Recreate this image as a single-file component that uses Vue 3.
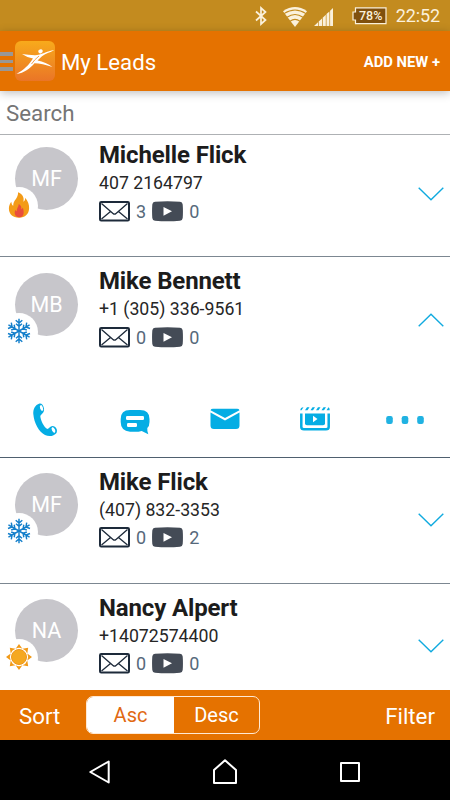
<script setup>
import { ref } from 'vue'

const leads = ref([
  { name: 'Michelle Flick', initials: 'MF', phone: '407 2164797', mails: 3, videos: 0, heat: 'hot', open: false },
  { name: 'Mike Bennett', initials: 'MB', phone: '+1 (305) 336-9561', mails: 0, videos: 0, heat: 'cold', open: true },
  { name: 'Mike Flick', initials: 'MF', phone: '(407) 832-3353', mails: 0, videos: 2, heat: 'cold', open: false },
  { name: 'Nancy Alpert', initials: 'NA', phone: '+14072574400', mails: 0, videos: 0, heat: 'warm', open: false }
])
const order = ref('Asc')
const arms = [0, 60, 120, 180, 240, 300]
const rays = [0, 45, 90, 135, 180, 225, 270, 315]
</script>

<template>
  <div class="screen">
    <div class="status">
      <svg class="bluetooth" width="14" height="20" viewBox="0 0 14 20">
        <path d="M2 5.5 L11.5 14 L7 18 V2 L11.5 6 L2 14.5" fill="none" stroke="#fbf1dc" stroke-width="1.7" />
      </svg>
      <svg class="wifi" width="24" height="20" viewBox="0 0 24 20">
        <path d="M12 20 L0 4.2 Q12 -4.2 24 4.2 Z" fill="#fbf1dc" />
        <path d="M1 6.6 Q12 -.7 23 6.6 M4 10.3 Q12 4.7 20 10.3 M7 14.2 Q12 10.5 17 14.2" fill="none" stroke="#c38b1f" stroke-width="1.1" />
      </svg>
      <svg class="signal" width="20" height="20" viewBox="0 0 20 20">
        <path d="M0 19 L4 15.2 V19Z M4.700 14.500 L8 11.4 V19 H4.700Z M8.700 10.700 L11.800 7.800 V19 H8.700Z M12.500 7.100 L15.400 4.400 V19 H12.500Z M16.100 3.700 L19 1 V19 H16.100Z" fill="#fbf1dc" />
      </svg>
      <div class="battery">
        <svg width="35" height="18" viewBox="0 0 35 18">
          <path d="M3.5 .8 H34 V16.7 H3.5 V13 H1 V5 H3.5Z" fill="#80500e" stroke="#fbf1dc" stroke-width="1.2" />
        </svg>
        <span>78%</span>
      </div>
      <span class="clock">22:52</span>
    </div>

    <header class="appbar">
      <div class="burger"><i></i><i></i><i></i></div>
      <svg class="logo" width="40" height="40" viewBox="0 0 40 40">
        <defs>
          <linearGradient id="logo-fill" x1="0" y1="0" x2="0" y2="1">
            <stop offset="0" stop-color="#f8aa1b" />
            <stop offset="1" stop-color="#ea7527" />
          </linearGradient>
        </defs>
        <rect width="40" height="40" rx="6" fill="url(#logo-fill)" />
        <ellipse cx="25.5" cy="10.3" rx="2.3" ry="2" fill="#fff" transform="rotate(-20 25.500 10.300)" />
        <path d="M7 13 Q13 14 20 14.2 C26 14 32 10 39.300 9 C36 11.300 31 12 27 15.300 L22.500 19.500 Q31 21.300 37.500 26 Q27 22.300 19.500 22.200 C15 27.500 9 32 1.500 33 C9 29 14 24 18 17.600 Q12 16.500 7 13Z" fill="#fff" />
        <path d="M24 15 Q19 19 16.500 23" fill="none" stroke="#f18c22" stroke-width=".8" />
      </svg>
      <h1>My Leads</h1>
      <button class="add">ADD NEW +</button>
    </header>

    <div class="search"><span>Search</span></div>

    <main class="list">
      <section v-for="lead in leads" :key="lead.name" class="lead" :class="{ open: lead.open }">
        <div class="summary" @click="lead.open = !lead.open">
          <div class="avatar">
            <span>{{ lead.initials }}</span>
            <div class="badge">
              <svg v-if="lead.heat === 'hot'" width="22" height="26" viewBox="0 0 22 27">
                <path d="M10 .3 C15 2.500 16.500 6 15.600 10 C17 9.300 17.600 7.500 17.500 6 C20.500 10 21.600 13 21.500 17 C21.300 23 17.500 26.700 11 26.700 C4.500 26.700 .6 23 .5 17.500 C.4 14.500 1.500 12 3 10 C3.200 12 3.700 13.500 5 14.300 C4.800 8.500 10.500 6.500 10 .3Z" fill="#f39b17" />
                <path d="M10.700 12.500 C14 14.500 13.500 16.500 13.300 18 C14.300 17.600 14.700 16.800 14.800 16 C16.300 19 17 26 11.500 26.300 C6.500 26.300 5.800 21.500 7.200 18.500 C7.600 19.500 8 20 8.700 20 C8.300 17 10.800 15.500 10.700 12.500Z" fill="#e94e3c" />
              </svg>
              <svg v-else-if="lead.heat === 'cold'" width="26" height="26" viewBox="-13 -13 26 26">
                <g v-for="a in arms" :key="a" :transform="`rotate(${a})`" fill="none" stroke="#137fcb" stroke-width="1.450">
                  <path d="M0 0 V-12.200 M-3.300 -10.800 L0 -8 L3.300 -10.800 M-3 -7.300 L0 -4.700 L3 -7.300" />
                </g>
              </svg>
              <svg v-else width="26" height="26" viewBox="-13 -13 26 26">
                <path v-for="a in rays" :key="a" :transform="`rotate(${a})`" d="M-3.400 -8.300 Q0 -10 3.400 -8.300 L0 -13Z" fill="#f29a17" />
                <circle r="7.500" fill="#f5a820" stroke="#ef9718" stroke-width="1" />
              </svg>
            </div>
          </div>
          <div class="info">
            <h2>{{ lead.name }}</h2>
            <p>{{ lead.phone }}</p>
            <div class="counts">
              <svg width="31" height="21" viewBox="0 0 31 21">
                <rect x="1" y="1" width="29" height="18.500" rx="1.200" fill="#fff" stroke="#1d2a3a" stroke-width="2" />
                <path d="M2.500 2.500 L14 12.500 Q15.500 13.800 17 12.500 L28.500 2.500 M2.500 18 L11.500 10.500 M28.500 18 L19.500 10.500" fill="none" stroke="#1d2a3a" stroke-width="1.300" />
              </svg>
              <span class="mails">{{ lead.mails }}</span>
              <svg width="31" height="21" viewBox="0 0 31 21">
                <path d="M3 .8 Q15.500 -.2 28 .8 Q30.500 1 30.700 3.500 Q31.200 10.300 30.700 17 Q30.500 19.500 28 19.800 Q15.500 20.800 3 19.800 Q.5 19.500 .3 17 Q-.2 10.300 .3 3.500 Q.5 1 3 .8Z" fill="#444b56" />
                <path d="M11.500 6 L20 10.300 L11.500 14.700Z" fill="#fff" />
              </svg>
              <span class="videos">{{ lead.videos }}</span>
            </div>
          </div>
          <svg class="chevron" :class="{ up: lead.open }" width="26" height="14" viewBox="0 0 26 14">
            <path d="M.7 .8 L13 12.800 L25.300 .8" fill="none" stroke="#10aadf" stroke-width="1.400" />
          </svg>
        </div>

        <div v-if="lead.open" class="actions">
          <svg width="26" height="34" viewBox="0 0 26 34">
            <path d="M7.500 .5 C3 2 1 6 1.300 11 C2 20 7 29 13 32 C17 34 22 33.300 24.500 30 C26 27 24 23 20.500 23 C18 23 17.500 25.500 15.500 26 C12 24.500 8.500 17 8.300 13 C9.500 10.500 12.500 10 12 5.500 C11.500 2 9.500 .2 7.500 .5Z" fill="#05ade4" />
            <ellipse cx="9.500" cy="5" rx="1.400" ry="3" transform="rotate(-18 9.500 5)" fill="#fff" />
            <ellipse cx="21.500" cy="27" rx="1.500" ry="3" transform="rotate(-27 21.500 27)" fill="#fff" />
          </svg>
          <svg class="chat" width="30" height="26" viewBox="0 0 30 26">
            <path d="M10 1 H20 Q29.500 1 29.500 10 V13 Q29.500 17 27.300 19 Q27 22 28.300 25.200 L21.700 22 Q18 23.200 10 22.700 Q.7 22 .7 13 V10 Q.7 1 10 1Z" fill="#05ade4" />
            <rect x="6" y="7" width="18" height="4" rx="1.200" fill="#fff" />
            <rect x="7" y="14" width="10" height="4" rx="1.200" fill="#fff" />
          </svg>
          <svg class="mail" width="30" height="22" viewBox="0 0 30 22">
            <path d="M3 .8 H27 Q29 .8 29.500 2.200 L15 10 L.5 2.200 Q1 .8 3 .8Z M.5 4.600 L15 12.400 L29.500 4.600 V17.500 Q29.500 21 26 21 H4 Q.5 21 .5 17.500Z" fill="#05ade4" />
          </svg>
          <svg class="film" width="30" height="24" viewBox="0 0 30 24">
            <path d="M.3 3.300 Q.5 .3 3.500 .3 L1.500 3.300Z M5 3.300 L7 .3 H9.500 L7.500 3.300Z M10.500 3.300 L12.500 .3 H15 L13 3.300Z M16 3.300 L18 .3 H20.500 L18.500 3.300Z M21.500 3.300 L23.500 .3 H26 L24 3.300Z M26.500 3.300 L28.500 .3 Q29.700 1 29.700 3.300Z" fill="#05ade4" />
            <path d="M1.300 6.500 V20 Q1.300 22.300 4 22.300 H26 Q28.700 22.300 28.700 20 V6.500" fill="none" stroke="#05ade4" stroke-width="2.500" />
            <path d="M5 6.500 H25 V16.500 Q25 18.300 23 18.300 H7 Q5 18.300 5 16.500Z" fill="#05ade4" />
            <path d="M13 8.700 L17.500 12 L13 15.300Z" fill="#fff" />
          </svg>
          <svg class="more" width="40" height="10" viewBox="0 0 40 10">
            <rect x="1.200" y="1" width="6.600" height="8" rx="2.200" fill="#20b2e2" />
            <rect x="16.700" y="1" width="6.600" height="8" rx="2.200" fill="#20b2e2" />
            <rect x="32.200" y="1" width="6.600" height="8" rx="2.200" fill="#20b2e2" />
          </svg>
        </div>
      </section>
    </main>

    <footer class="toolbar">
      <span class="sort">Sort</span>
      <div class="segment">
        <button v-for="o in ['Asc', 'Desc']" :key="o" :class="{ active: order === o }" @click="order = o">{{ o }}</button>
      </div>
      <span class="filter">Filter</span>
    </footer>

    <nav class="system">
      <svg width="26" height="28" viewBox="0 0 26 28">
        <path d="M3.300 14 L21.700 3.500 V24.500Z" fill="none" stroke="#fff" stroke-width="2" stroke-linejoin="round" />
      </svg>
      <svg width="26" height="28" viewBox="0 0 26 28">
        <path d="M2 12 L13 2.300 L24 12 V25 H2Z" fill="none" stroke="#fff" stroke-width="2" stroke-linejoin="round" />
      </svg>
      <svg width="26" height="28" viewBox="0 0 26 28">
        <rect x="4" y="5" width="18" height="18" fill="none" stroke="#fff" stroke-width="2" stroke-linejoin="round" />
      </svg>
    </nav>
  </div>
</template>

<style>
body { margin: 0; overflow: hidden; }
</style>

<style scoped>
* { box-sizing: border-box; }
.screen {
  width: 450px;
  height: 800px;
  display: flex;
  flex-direction: column;
  overflow: hidden;
  background: #fff;
  font-family: Roboto, "Liberation Sans", sans-serif;
}
svg { display: block; flex: none; }
button { padding: 0; border: 0; background: none; font-family: inherit; }
h1, h2, p { margin: 0; }

.status {
  flex: none;
  height: 31px;
  background: #c38b1f;
  display: flex;
  align-items: center;
  justify-content: flex-end;
  padding-right: 10px;
  color: #fbf1dc;
}
.bluetooth { margin-right: 15px; }
.wifi { margin: 2px 7px 0 0; }
.signal { margin: 2px 18px 0 0; }
.battery { display: grid; margin-right: 9px; }
.battery > * { grid-area: 1 / 1; }
.battery span { padding-left: 3px; font-size: 12.500px; font-weight: 500; line-height: 18px; text-align: center; }
.clock { font-size: 18px; line-height: 32px; letter-spacing: -0.1px; padding-top: 1px; }

.appbar {
  flex: none;
  height: 60px;
  background: #e57200;
  color: #fff;
  display: flex;
  align-items: center;
  padding-right: 10px;
  box-shadow: 0 2px 9px rgba(0, 0, 0, 0.26);
  z-index: 1;
}
.burger { width: 13px; display: grid; gap: 4px; margin-right: 2px; padding-top: 1px; }
.burger i { height: 3.500px; background: #999795; }
.appbar h1 { flex: 1; margin-left: 6px; font-size: 22.200px; font-weight: 400; line-height: 30px; padding-top: 2px; }
.add { color: #fff; font-size: 14.800px; font-weight: 700; padding-top: 2px; }

.search {
  flex: none;
  height: 44px;
  border-bottom: 1px solid #aeb1b4;
  padding: 1px 6px 0;
  line-height: 43px;
  font-size: 22.300px;
  color: #757575;
}

.list { flex: 1; min-height: 0; overflow: hidden; }
.lead { height: 126px; border-top: 1px solid #7c8791; padding-top: 15px; }
.lead.open { height: 201px; padding-top: 16px; }
.lead:first-child { height: 121px; border-top: 0; padding-top: 12px; }
.lead + .lead.open + .lead { border-top-color: #4f606f; }
.summary { height: 80px; display: flex; align-items: flex-start; padding: 0 6px 0 15px; }
.avatar {
  position: relative;
  width: 63px;
  height: 63px;
  border-radius: 50%;
  background: #c7c6cb;
  color: #fff;
  font-size: 21.500px;
  line-height: 64px;
  text-align: center;
}
.badge {
  position: absolute;
  left: -15px;
  top: 40px;
  width: 38px;
  height: 38px;
  border-radius: 50%;
  background: #fff;
  display: grid;
  place-items: center;
  padding: 0 1px 3px 0;
}
.info { flex: 1; padding-left: 21px; margin-top: -5px; }
.info h2 { font-size: 24px; line-height: 28px; font-weight: 700; letter-spacing: -0.14px; color: #1c1c1c; }
.info p { font-size: 17.700px; line-height: 24px; padding-top: 2px; color: #262626; }
.counts { display: flex; align-items: center; margin-top: 4px; font-size: 18px; line-height: 21px; color: #56697b; }
.counts span { padding-top: 1px; margin-left: 6px; }
.lead.open .info, .lead:first-child .info { margin-top: -6px; }
.lead.open .counts, .lead:first-child .counts { margin-top: 5px; }
.mails { margin-right: 6px; }
.chevron { margin-top: 40px; }
.chevron.up { transform: scaleY(-1); }
.actions { display: grid; grid-template-columns: repeat(5, 90px); align-items: center; justify-items: center; height: 104px; padding-top: 30px; }
.mail, .film { margin-bottom: 2px; }
.chat { margin-top: 3px; }

.toolbar {
  flex: none;
  height: 50px;
  background: #e57200;
  color: #fff;
  display: flex;
  align-items: center;
  padding: 0 15px 0 19px;
  font-size: 22.300px;
}
.sort { width: 67px; padding-top: 2px; }
.segment {
  width: 174px;
  height: 38px;
  border: 1px solid #ffe9d4;
  border-radius: 7px;
  overflow: hidden;
  display: grid;
  grid-template-columns: 87px 1fr;
}
.segment button { font-size: 20px; color: #fff; }
.segment .active { background: #fff; color: #e16912; }
.filter { margin-left: auto; padding-top: 2px; }

.system {
  flex: none;
  height: 60px;
  background: #000;
  display: flex;
  justify-content: center;
  align-items: center;
  gap: 99px;
  padding-top: 4px;
}
</style>
